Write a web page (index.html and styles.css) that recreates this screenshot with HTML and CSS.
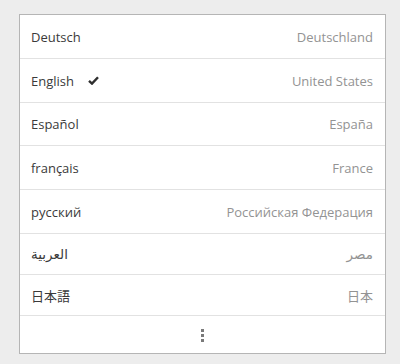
FILE: index.html
```html
<!DOCTYPE html>
<html>
<head>
<meta charset="utf-8">
<link rel="stylesheet" href="styles.css">
</head>
<body>
<div class="panel">
  <div class="row r43"><span class="lang">Deutsch</span><span class="region">Deutschland</span></div>
  <div class="row r43"><span class="lang">English <svg class="check" width="11" height="9" viewBox="0 0 11 9"><path d="M1 4.8 L4 7.6 L10 1.2" fill="none" stroke="#2e2e2e" stroke-width="2.4" stroke-linejoin="miter"/></svg></span><span class="region">United States</span></div>
  <div class="row r42"><span class="lang">Español</span><span class="region">España</span></div>
  <div class="row r43"><span class="lang">français</span><span class="region">France</span></div>
  <div class="row r43"><span class="lang">русский</span><span class="region">Российская Федерация</span></div>
  <div class="row r40"><span class="lang arabic">العربية</span><span class="region arabic">مصر</span></div>
  <div class="row r40"><span class="lang">日本語</span><span class="region">日本</span></div>
  <div class="more">
    <span class="dots"><i></i><i></i><i></i></span>
  </div>
</div>
</body>
</html>
```
FILE: styles.css
```css
html, body {
  margin: 0;
  padding: 0;
  background: #ededed;
}
body {
  padding: 14px 14px 0 19px;
  font-family: "Open Sans", "Noto Sans", "Noto Sans CJK JP", sans-serif;
  font-size: 13px;
}
.panel {
  width: 365px;
  background: #ffffff;
  border: 1px solid #b5b5b5;
  display: flex;
  flex-direction: column;
}
.row {
  display: flex;
  align-items: center;
  justify-content: space-between;
  padding: 0 12px 0 11px;
  border-bottom: 1px solid #e2e2e2;
  box-sizing: content-box;
}
.r43 { height: 43px; }
.r42 { height: 42px; }
.r40 { height: 40px; }
.lang {
  color: #3a3a3a;
  display: flex;
  align-items: center;
  gap: 14px;
}
.region {
  color: #939393;
}
.arabic {
  font-family: "Noto Sans", "DejaVu Sans", sans-serif;
  font-size: 13.5px;
}
.check {
  display: block;
}
.more {
  height: 37px;
  display: flex;
  align-items: center;
  justify-content: center;
}
.dots {
  display: flex;
  flex-direction: column;
  gap: 2px;
  margin-top: 1px;
}
.dots i {
  display: block;
  width: 3px;
  height: 3px;
  background: #7a7a7a;
}
```
